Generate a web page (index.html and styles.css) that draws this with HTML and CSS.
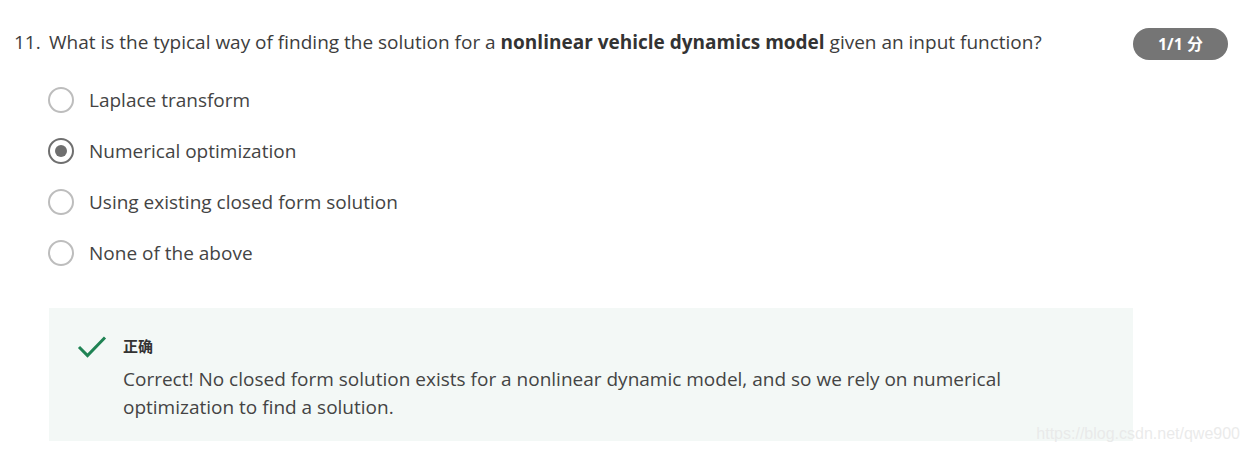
FILE: index.html
```html
<!DOCTYPE html>
<html>
<head>
<meta charset="utf-8"/>
<link rel="stylesheet" href="styles.css">
<title>Quiz question 11</title>
</head>
<body>
<div class="question">
  <div class="qhead">
    <span class="qnum">11.</span>
    <div class="qtext">What is the typical way of finding the solution for a <strong>nonlinear vehicle dynamics model</strong> given an input function?</div>
    <span class="score">1/1 分</span>
  </div>

  <div class="options">
    <div class="option"><span class="radio"></span>Laplace transform</div>
    <div class="option"><span class="radio checked"></span>Numerical optimization</div>
    <div class="option"><span class="radio"></span>Using existing closed form solution</div>
    <div class="option"><span class="radio"></span>None of the above</div>
  </div>

  <div class="feedback">
    <svg class="check" width="30" height="24" viewBox="0 0 30 24">
      <path d="M2 12 L10.5 20.5 L28 2.5" fill="none" stroke="#1f8354" stroke-width="3"/>
    </svg>
    <div class="fbtext">
      <div class="fbtitle">正确</div>
      <div>Correct! No closed form solution exists for a nonlinear dynamic model, and so we rely on numerical optimization to find a solution.</div>
    </div>
  </div>
</div>
<div class="watermark">https://blog.csdn.net/qwe900</div>
</body>
</html>
```

FILE: styles.css
```css
body {
  margin: 0;
  background: #ffffff;
  font-family: "Open Sans", "Noto Sans CJK SC", sans-serif;
  color: #3d3d3d;
}

.question {
  padding: 28px 22px 0 14px;
}

.qhead {
  display: flex;
  align-items: flex-start;
  font-size: 19px;
  line-height: 28px;
}

.qnum {
  width: 35px;
  flex: none;
}

.qtext {
  flex: 1;
}

.qtext strong {
  font-weight: 700;
  color: #333;
}

.score {
  flex: none;
  width: 95px;
  height: 32px;
  line-height: 32px;
  border-radius: 16px;
  background: #757575;
  color: #fff;
  font-size: 16px;
  font-weight: 700;
  text-align: center;
}

.options {
  margin: 14px 0 0 34px;
}

.option {
  display: flex;
  align-items: center;
  height: 51px;
  font-size: 19px;
  color: #444;
}

.radio {
  width: 22px;
  height: 22px;
  border: 2px solid #bdbdbd;
  border-radius: 50%;
  margin-right: 15px;
  box-sizing: content-box;
  position: relative;
}

.radio.checked {
  border-color: #6f6f6f;
}

.radio.checked::after {
  content: "";
  position: absolute;
  left: 5px;
  top: 5px;
  width: 12px;
  height: 12px;
  border-radius: 50%;
  background: #6f6f6f;
}

.feedback {
  display: flex;
  margin: 30px 95px 0 35px;
  padding: 26px 20px 20px 28px;
  height: 133px;
  box-sizing: border-box;
  background: #f3f8f6;
}

.check {
  flex: none;
  margin: 1px 16px 0 0;
}

.fbtext {
  font-size: 19px;
  line-height: 28px;
  color: #444;
  max-width: 920px;
}

.fbtitle {
  font-size: 15px;
  font-weight: 700;
  color: #333;
  line-height: 24px;
  margin-bottom: 7px;
}

.watermark {
  position: absolute;
  right: 10px;
  top: 425px;
  font-family: "Liberation Sans", Arial, sans-serif;
  font-size: 16px;
  color: rgba(232, 232, 232, 0.9);
}
```
